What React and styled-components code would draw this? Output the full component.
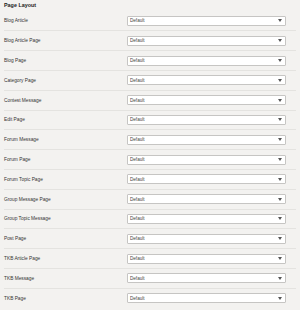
import React from "react";
import styled, { createGlobalStyle } from "styled-components";

const GlobalStyle = createGlobalStyle`
  html, body {
    margin: 0;
    padding: 0;
    background: #f3f2f0;
  }
`;

const Panel = styled.div`
  width: 300px;
  height: 310px;
  box-sizing: border-box;
  padding: 0 4px;
  font-family: "Liberation Sans", Arial, sans-serif;
  color: #333;
  overflow: hidden;
`;

const Title = styled.div`
  height: 11.6px;
  line-height: 10px;
  font-size: 5.4px;
  font-weight: 700;
  color: #222;
`;

const Row = styled.div`
  height: 19.8px;
  box-sizing: border-box;
  display: grid;
  grid-template-columns: 123px 159px;
  align-items: center;
  border-bottom: 1px solid ${({ $last }) => ($last ? "transparent" : "#e4e3e0")};
`;

const Label = styled.div`
  font-size: 4.8px;
  color: #333;
  white-space: nowrap;
`;

const Select = styled.div`
  height: 10px;
  box-sizing: border-box;
  border: 1px solid #c6c5c3;
  border-radius: 1px;
  background: #fff;
  display: flex;
  align-items: center;
  justify-content: space-between;
  padding: 0 3px 0 2px;
  font-size: 4.6px;
  color: #444;
`;

const Caret = () => (
  <svg width="4" height="3" viewBox="0 0 8 6">
    <path d="M0 0 L8 0 L4 6 Z" fill="#555" />
  </svg>
);

const pages = [
  "Blog Article",
  "Blog Article Page",
  "Blog Page",
  "Category Page",
  "Contest Message",
  "Edit Page",
  "Forum Message",
  "Forum Page",
  "Forum Topic Page",
  "Group Message Page",
  "Group Topic Message",
  "Post Page",
  "TKB Article Page",
  "TKB Message",
  "TKB Page",
];

export default function App() {
  return (
    <>
      <GlobalStyle />
      <Panel>
        <Title>Page Layout</Title>
        {pages.map((p, i) => (
          <Row key={p} $last={i === pages.length - 1}>
            <Label>{p}</Label>
            <Select>
              <span>Default</span>
              <Caret />
            </Select>
          </Row>
        ))}
      </Panel>
    </>
  );
}
